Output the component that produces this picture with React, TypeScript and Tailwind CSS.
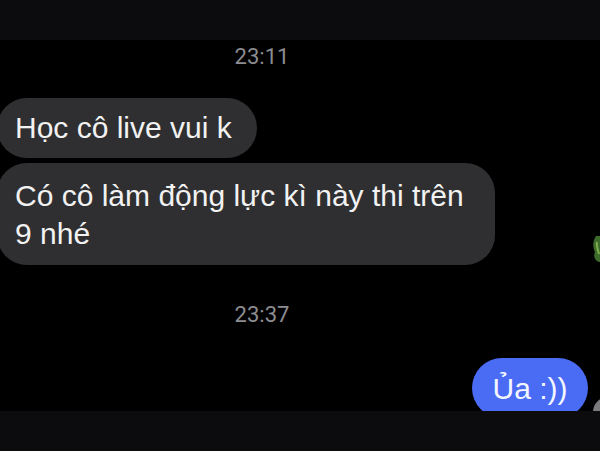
import React from 'react';

const font = { fontFamily: '"Liberation Sans", Arial, sans-serif' };

function TimeStamp({ time }: { time: string }) {
  return (
    <div className="flex justify-center pr-[76px]">
      <span className="text-[22px] leading-[24px] text-[#8d8d91]" style={{ fontFamily: 'Roboto, sans-serif' }}>
        {time}
      </span>
    </div>
  );
}

export default function App() {
  return (
    <div className="w-[600px] h-[451px] flex flex-col bg-black overflow-hidden" style={font}>
      {/* top bar */}
      <div className="h-[40px] shrink-0 bg-[#0c0b0d]" />

      {/* chat */}
      <div className="relative flex-1 overflow-hidden flex flex-col">
        <div className="pt-[5px]">
          <TimeStamp time="23:11" />
        </div>

        <div className="mt-[29px] flex flex-col gap-[5px] -ml-[3px]">
          <div className="w-[260px] rounded-[30px] bg-[#2f2f31] pl-[18px] py-[11px] text-[30px] leading-[38px] text-[#f2f2f2]">
            Học cô live vui k
          </div>
          <div className="w-[498px] rounded-[30px] bg-[#2f2f31] pl-[18px] pr-[20px] pt-[14px] pb-[12px] text-[30px] leading-[38px] text-[#f2f2f2]">
            Có cô làm động lực kì này thi trên
            <br />
            9 nhé
          </div>
        </div>

        <div className="mt-[38px]">
          <TimeStamp time="23:37" />
        </div>

        <div className="mt-[31px] flex justify-end pr-[12px]">
          <div className="w-[116px] h-[60px] shrink-0 rounded-[30px] bg-[#4a6bf4] flex items-center justify-center pt-[2px] text-[30px] leading-[38px] text-[#f4f6ff]">
            Ủa :))
          </div>
        </div>

        {/* sticker edge */}
        <svg className="absolute left-[590px] top-[194px]" width="12" height="30" viewBox="0 0 12 30">
          <path d="M6 2 C2 8 3 14 5 18 C3 22 5 27 9 28 L12 28 L12 2 Z" fill="#3d6b2c" />
          <path d="M7 8 C6 12 8 16 9 20" stroke="#7fae4a" strokeWidth="2" fill="none" />
        </svg>

        {/* avatar edge */}
        <div className="absolute left-[593px] top-[357px] w-[30px] h-[30px] rounded-full bg-[#7b7b7d]" />
      </div>

      {/* bottom bar */}
      <div className="h-[40px] shrink-0 bg-[#0c0b0d]" />
    </div>
  );
}
